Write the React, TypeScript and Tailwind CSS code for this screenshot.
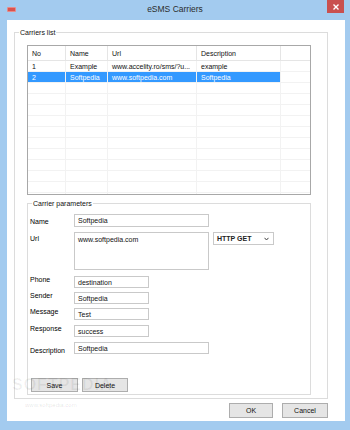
import React from "react";

const cols = [38, 42, 89, 84];

function Row({ cells, selected }: { cells: string[]; selected?: boolean }) {
  return (
    <div className="flex h-[11px] shrink-0 border-b border-[#f2f2f2]">
      {cols.map((w, i) => (
        <div
          key={i}
          style={{ width: w }}
          className={`shrink-0 h-full flex items-center pl-[4px] overflow-hidden whitespace-nowrap border-r border-[#f2f2f2] ${
            selected ? "bg-[#3399ff] text-white" : "text-[#111]"
          }`}
        >
          {cells[i] ?? ""}
        </div>
      ))}
      <div className="flex-1" />
    </div>
  );
}

function Field({ w, h = 12, value }: { w: number; h?: number; value: string }) {
  return (
    <div
      style={{ width: w, height: h }}
      className="shrink-0 border border-[#c9c9c9] bg-white pl-[3px] flex items-center text-[#111] whitespace-nowrap overflow-hidden"
    >
      {value}
    </div>
  );
}

function Btn({ w, label, cls = "" }: { w: number; label: string; cls?: string }) {
  return (
    <div
      style={{ width: w }}
      className={`shrink-0 border border-[#adadad] bg-[#e5e5e5] flex items-center justify-center text-[#111] ${cls}`}
    >
      {label}
    </div>
  );
}

export default function App() {
  const rows: string[][] = [
    ["1", "Example", "www.accelity.ro/sms/?u...", "example"],
    ["2", "Softpedia", "www.softpedia.com", "Softpedia"],
  ];
  const empty = Array.from({ length: 11 });
  return (
    <div className="w-[350px] h-[430px] bg-[#a3cbef] flex flex-col pl-[7px] pr-[5px] pb-[9px] font-['Liberation_Sans',Arial,sans-serif] text-[7px] leading-none overflow-hidden">
      {/* Title bar */}
      <div className="h-[20px] shrink-0 relative flex items-start">
        <div className="mt-[7px] w-[9px] h-[5px] rounded-[1px] bg-[#d9534f] border border-[#e88a87]" />
        <div className="absolute left-[-7px] right-[-5px] top-[5px] text-center text-[8.5px] text-[#2b2b2b]">
          eSMS Carriers
        </div>
        <div className="ml-auto mr-[1px] w-[17px] h-[13px] bg-[#c9504f] flex items-center justify-center">
          <svg width="6" height="6" viewBox="0 0 6 6">
            <path d="M0.5 0.5 L5.5 5.5 M5.5 0.5 L0.5 5.5" stroke="white" strokeWidth="1.4" />
          </svg>
        </div>
      </div>

      {/* Client area */}
      <div className="flex-1 bg-white flex flex-col relative">
        {/* Outer group */}
        <div className="relative ml-[7px] mt-[12px] w-[314px] h-[367px] border border-[#dcdcdc] flex flex-col pl-[12px] pt-[12px]">
          <div className="absolute left-[4px] top-[-4px] bg-white px-[1px] text-[#111]">Carriers list</div>

          {/* List view */}
          <div className="w-[284px] h-[150px] border border-[#a8a8a8] flex flex-col overflow-hidden">
            <div className="flex h-[15px] shrink-0 border-b border-[#e5e5e5]">
              {["No", "Name", "Url", "Description"].map((t, i) => (
                <div
                  key={t}
                  style={{ width: cols[i] }}
                  className="shrink-0 h-full flex items-center pl-[4px] border-r border-[#e5e5e5] text-[#111]"
                >
                  {t}
                </div>
              ))}
              <div className="flex-1" />
            </div>
            {rows.map((r, i) => (
              <Row key={i} cells={r} selected={i === 1} />
            ))}
            {empty.map((_, i) => (
              <Row key={"e" + i} cells={[]} />
            ))}
          </div>

          {/* Carrier parameters */}
          <div className="relative mt-[8px] w-[284px] h-[192px] border border-[#dcdcdc] flex flex-col pl-[2px]">
            <div className="absolute left-[4px] top-[-4px] bg-white px-[1px] text-[#111]">Carrier parameters</div>

            <div className="flex items-start mt-[10px]">
              <div className="w-[44px] pt-[4px]">Name</div>
              <Field w={135} h={13} value="Softpedia" />
            </div>
            <div className="flex items-start mt-[5px]">
              <div className="w-[44px] pt-[3px]">Url</div>
              <div className="w-[135px] h-[38px] border border-[#c9c9c9] pl-[3px] pt-[3px] text-[#111]">
                www.softpedia.com
              </div>
              <div className="ml-[4px] w-[61px] h-[13px] border border-[#c9c9c9] flex items-center pl-[3px] pr-[4px] font-bold text-[#222]">
                HTTP GET
                <svg className="ml-auto" width="5" height="4" viewBox="0 0 5 4">
                  <path d="M0.5 0.8 L2.5 3 L4.5 0.8" stroke="#444" strokeWidth="1" fill="none" />
                </svg>
              </div>
            </div>
            <div className="flex items-start mt-[6px]">
              <div className="w-[44px]">Phone</div>
              <Field w={75} value="destination" />
            </div>
            <div className="flex items-start mt-[4px]">
              <div className="w-[44px]">Sender</div>
              <Field w={75} value="Softpedia" />
            </div>
            <div className="flex items-start mt-[4px]">
              <div className="w-[44px]">Message</div>
              <Field w={75} value="Test" />
            </div>
            <div className="flex items-start mt-[5px]">
              <div className="w-[44px]">Response</div>
              <Field w={75} value="success" />
            </div>
            <div className="flex items-start mt-[5px]">
              <div className="w-[44px] pt-[5px]">Description</div>
              <Field w={135} value="Softpedia" />
            </div>
            <div className="flex mt-[24px] gap-[4px] ml-[1px]">
              <Btn w={47} label="Save" cls="h-[14px]" />
              <Btn w={46} label="Delete" cls="h-[14px]" />
            </div>
          </div>
        </div>

        {/* OK / Cancel */}
        <div className="flex mt-[4px] ml-[222px] gap-[9px]">
          <Btn w={44} label="OK" cls="h-[15px]" />
          <Btn w={46} label="Cancel" cls="h-[15px]" />
        </div>

        {/* Watermark */}
        <div className="absolute left-[5px] top-[357px] text-[16px] tracking-[1px] text-[rgba(0,0,0,0.06)] font-bold pointer-events-none">
          SOFTPEDIA
        </div>
        <div className="absolute left-[18px] top-[382px] text-[6px] text-[rgba(0,0,0,0.12)] pointer-events-none">
          www.softpedia.com
        </div>
      </div>
    </div>
  );
}
